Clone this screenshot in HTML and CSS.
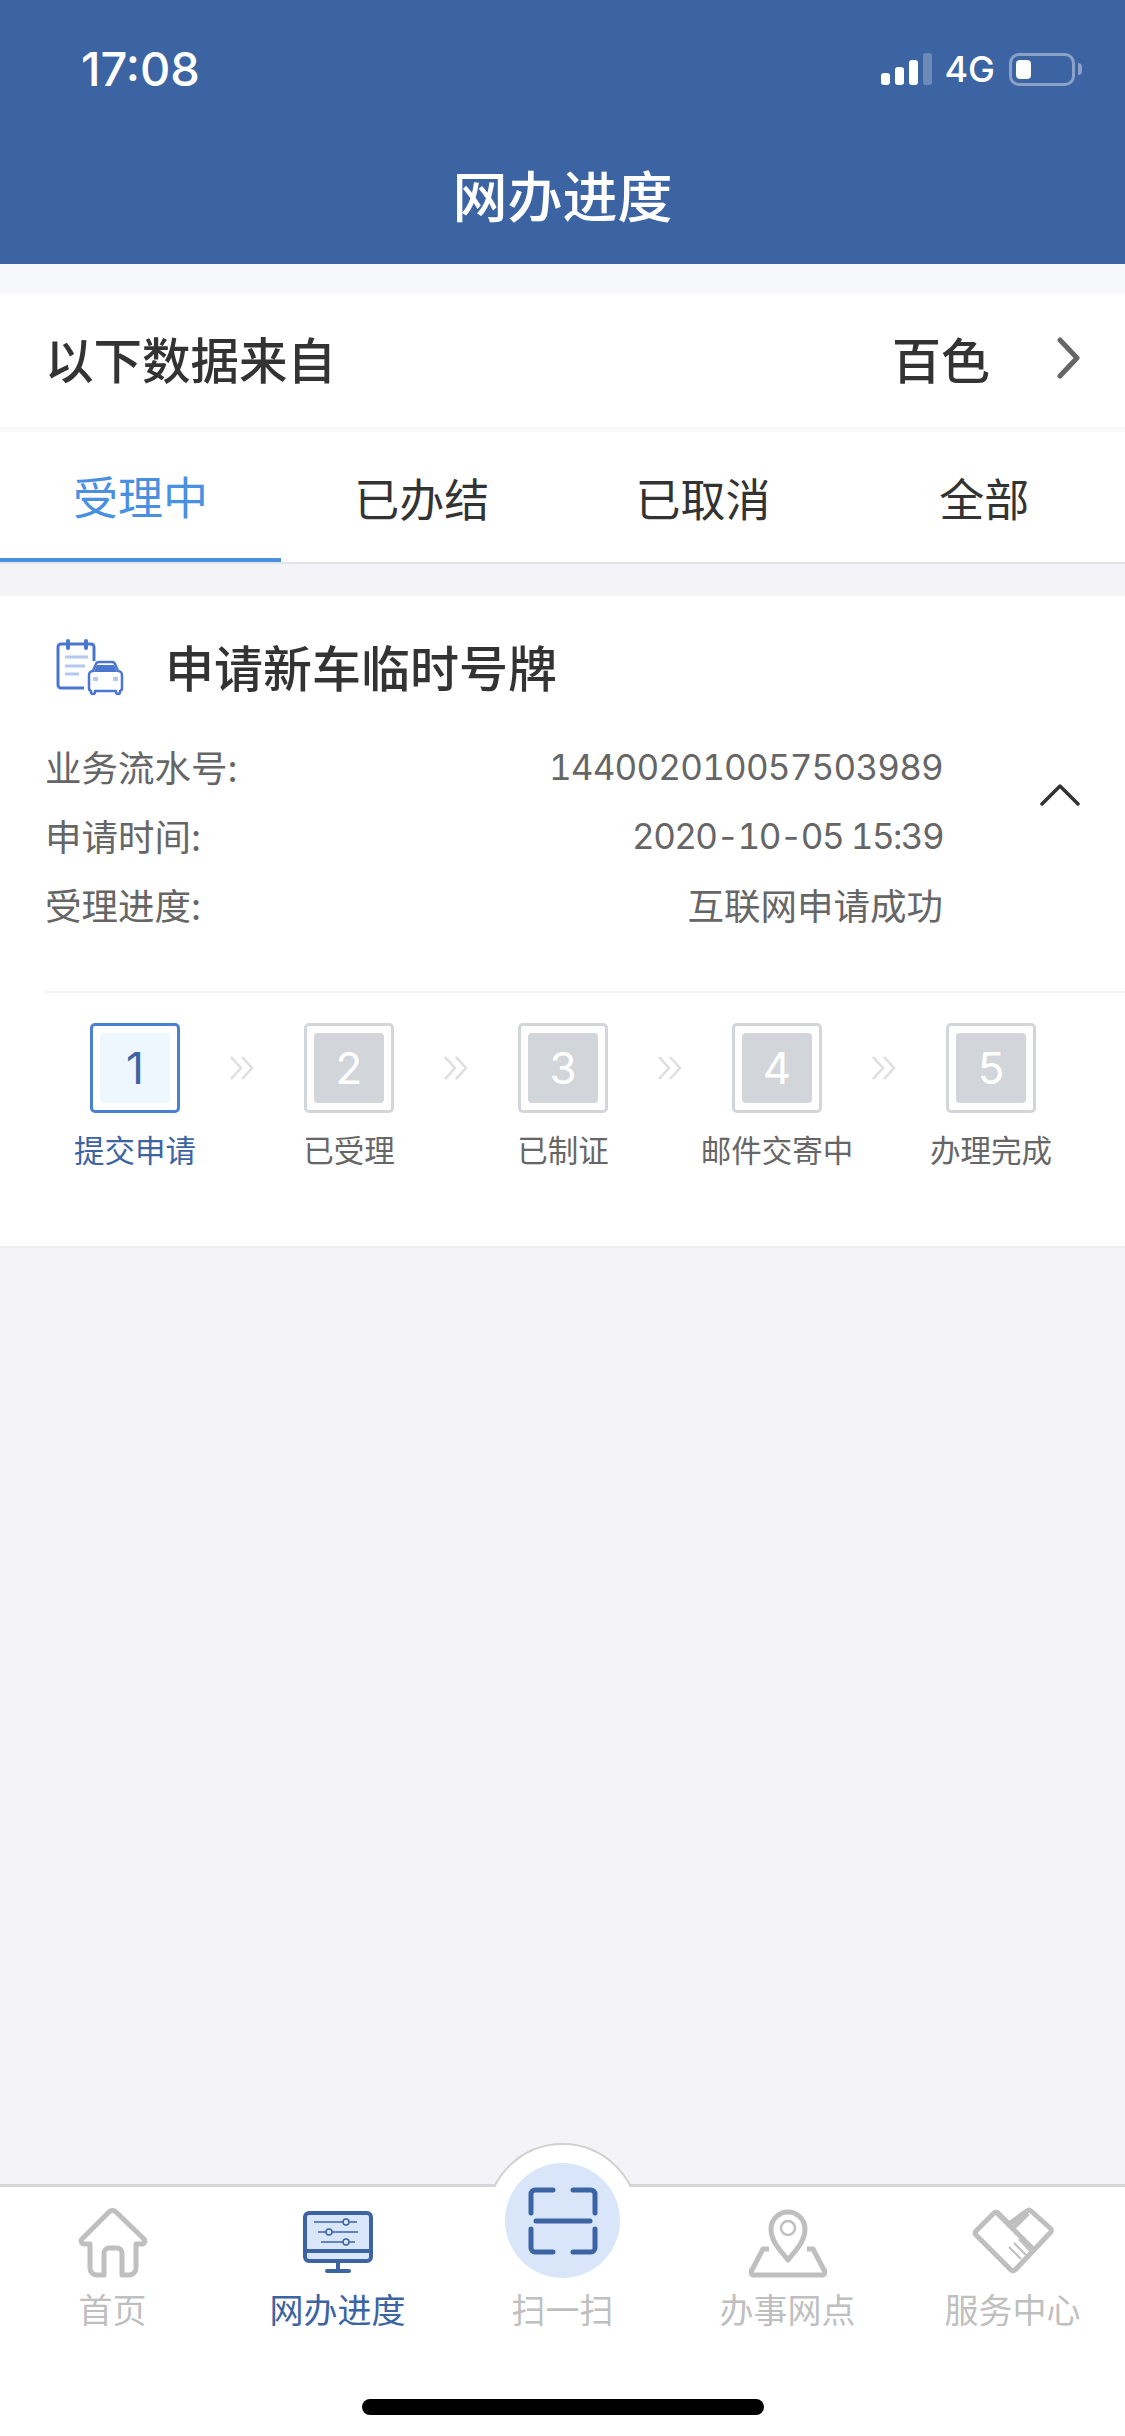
FILE: index.html
```html
<!DOCTYPE html>
<html lang="zh-CN">

<head>
  <meta charset="UTF-8" />
  <meta name="viewport" content="width=device-width, initial-scale=1" />
  <title>网办进度</title>
  <link rel="stylesheet" href="styles.css">
</head>

<body>
  <div class="page">
    <header class="header">
      <div class="status">
        <span class="time">17:08</span>
        <div class="status-right">
          <div class="signal">
            <i class="bar bar1"></i><i class="bar bar2"></i><i class="bar bar3"></i><i class="bar bar4"></i>
          </div>
          <span class="net">4G</span>
          <div class="battery"><i class="battery-fill"></i></div>
          <i class="battery-nub"></i>
        </div>
      </div>
      <h1 class="title">网办进度</h1>
    </header>

    <div class="source-band">
      <div class="source">
        <span class="source-label">以下数据来自</span>
        <span class="source-city">百色</span>
        <svg class="source-arrow" width="26" height="42" viewBox="0 0 26 42">
          <path d="M4 3 L21 21 L4 39" fill="none" stroke="#666" stroke-width="5" stroke-linecap="round" stroke-linejoin="round" />
        </svg>
      </div>
    </div>

    <nav class="tabs">
      <a class="tab active">受理中</a>
      <a class="tab">已办结</a>
      <a class="tab">已取消</a>
      <a class="tab">全部</a>
    </nav>

    <section class="card">
      <div class="card-head">
        <svg class="card-icon" width="70" height="58" viewBox="0 0 70 58">
          <path d="M28 49 H5 a3 3 0 0 1-3-3 V8 a3 3 0 0 1 3-3 H35 a3 3 0 0 1 3 3 V22" fill="none" stroke="#4a76cf" stroke-width="3" />
          <path d="M12 2 V9 M30 2 V9" stroke="#4a76cf" stroke-width="4" stroke-linecap="round" />
          <path d="M9 18 H32 M9 27 H29 M9 35 H23" stroke="#b5c8ee" stroke-width="3" />
          <path d="M33 36 a4 4 0 0 1 4-4 l3-7 a3 3 0 0 1 3-2 H56 a3 3 0 0 1 3 2 l3 7 a4 4 0 0 1 4 4 V49 a3 3 0 0 1-2 3 V53 a2 2 0 0 1-4 0 V52 H39 V53 a2 2 0 0 1-4 0 V52 a3 3 0 0 1-2-3 Z" fill="#fff" stroke="#4a76cf" stroke-width="2.5" stroke-linejoin="round" />
          <path d="M38 33 L41 26 H58 L61 33 Z" fill="#4a76cf" />
          <path d="M37 38 h5 v4 h-5 Z M57 38 h5 v4 h-5 Z" fill="#b5c8ee" />
        </svg>
        <h2 class="card-title">申请新车临时号牌</h2>
      </div>

      <div class="info">
        <div class="info-rows">
          <div class="info-row"><span>业务流水号:</span><span class="num">144002010057503989</span></div>
          <div class="info-row"><span>申请时间:</span><span class="num num-date">2020-10-05 15:39</span></div>
          <div class="info-row"><span>受理进度:</span><span>互联网申请成功</span></div>
        </div>
        <svg class="info-toggle" width="40" height="24" viewBox="0 0 40 24">
          <path d="M2 22 L20 4 L38 22" fill="none" stroke="#333" stroke-width="3.5" stroke-linecap="round" stroke-linejoin="round" />
        </svg>
      </div>

      <div class="steps">
        <div class="step current">
          <div class="step-box"><span class="step-num">1</span></div>
          <span class="step-label">提交申请</span>
        </div>
        <svg class="step-arrow" width="26" height="26" viewBox="0 0 26 26"><path d="M2 2 L12 13 L2 24 M13 2 L23 13 L13 24" fill="none" stroke="#dcdee2" stroke-width="2.5" /></svg>
        <div class="step">
          <div class="step-box"><span class="step-num">2</span></div>
          <span class="step-label">已受理</span>
        </div>
        <svg class="step-arrow" width="26" height="26" viewBox="0 0 26 26"><path d="M2 2 L12 13 L2 24 M13 2 L23 13 L13 24" fill="none" stroke="#dcdee2" stroke-width="2.5" /></svg>
        <div class="step">
          <div class="step-box"><span class="step-num">3</span></div>
          <span class="step-label">已制证</span>
        </div>
        <svg class="step-arrow" width="26" height="26" viewBox="0 0 26 26"><path d="M2 2 L12 13 L2 24 M13 2 L23 13 L13 24" fill="none" stroke="#dcdee2" stroke-width="2.5" /></svg>
        <div class="step">
          <div class="step-box"><span class="step-num">4</span></div>
          <span class="step-label">邮件交寄中</span>
        </div>
        <svg class="step-arrow" width="26" height="26" viewBox="0 0 26 26"><path d="M2 2 L12 13 L2 24 M13 2 L23 13 L13 24" fill="none" stroke="#dcdee2" stroke-width="2.5" /></svg>
        <div class="step">
          <div class="step-box"><span class="step-num">5</span></div>
          <span class="step-label">办理完成</span>
        </div>
      </div>
    </section>

    <footer class="tabbar">
      <div class="scan-arc"><i class="scan-arc-circle"></i></div>
      <div class="tabbar-items">
        <a class="bar-item">
          <svg class="bar-icon" width="74" height="74" viewBox="0 0 74 74">
            <path d="M14 38 H8 a3 3 0 0 1-2-5 L33 6 a5 5 0 0 1 7 0 L68 33 a3 3 0 0 1-2 5 H60 V62 a7 7 0 0 1-7 7 H46 V47 a5 5 0 0 0-5-5 H33 a5 5 0 0 0-5 5 V69 H21 a7 7 0 0 1-7-7 Z" fill="none" stroke="#bfbfbf" stroke-width="5" stroke-linejoin="round" />
          </svg>
          <span class="bar-label">首页</span>
        </a>
        <a class="bar-item active">
          <svg class="bar-icon" width="74" height="74" viewBox="0 0 74 74">
            <rect x="4" y="7" width="66" height="48" rx="4" fill="#d9e6fa" stroke="#3c64a2" stroke-width="4" />
            <path d="M4 45 H70" stroke="#3c64a2" stroke-width="4" />
            <path d="M37 55 V64" stroke="#3c64a2" stroke-width="4" />
            <path d="M26 65 H48" stroke="#3c64a2" stroke-width="4" stroke-linecap="round" />
            <path d="M13 16 H56 M17 26 H57 M20 36 H54" stroke="#3c64a2" stroke-width="1.5" />
            <circle cx="45" cy="16" r="3" fill="#d9e6fa" stroke="#3c64a2" stroke-width="1.5" />
            <circle cx="28" cy="26" r="3" fill="#d9e6fa" stroke="#3c64a2" stroke-width="1.5" />
            <circle cx="45" cy="36" r="3" fill="#d9e6fa" stroke="#3c64a2" stroke-width="1.5" />
          </svg>
          <span class="bar-label">网办进度</span>
        </a>
        <a class="bar-item">
          <div class="scan-circle">
            <svg width="70" height="68" viewBox="0 0 70 68">
              <path d="M25 3 H7 a4 4 0 0 0-4 4 V26 M45 3 H63 a4 4 0 0 1 4 4 V26 M3 42 V61 a4 4 0 0 0 4 4 H25 M67 42 V61 a4 4 0 0 1-4 4 H45" fill="none" stroke="#3c64a2" stroke-width="5" stroke-linecap="round" />
              <path d="M8 34 H62" stroke="#3c64a2" stroke-width="5" stroke-linecap="round" />
            </svg>
          </div>
          <span class="bar-icon-slot"></span>
          <span class="bar-label">扫一扫</span>
        </a>
        <a class="bar-item">
          <svg class="bar-icon" width="78" height="74" viewBox="0 0 78 74">
            <path d="M20 43 H14 L3 64 a3 3 0 0 0 3 5 H72 a3 3 0 0 0 3-5 L64 43 H58" fill="none" stroke="#bfbfbf" stroke-width="5" stroke-linejoin="round" />
            <path d="M39 54 C31 44 22 35 22 23 a17 17 0 0 1 34 0 C56 35 47 44 39 54 Z" fill="#fff" stroke="#bfbfbf" stroke-width="5" stroke-linejoin="round" />
            <circle cx="39" cy="22" r="7" fill="none" stroke="#bfbfbf" stroke-width="2.5" />
          </svg>
          <span class="bar-label">办事网点</span>
        </a>
        <a class="bar-item">
          <svg class="bar-icon" width="82" height="74" viewBox="0 0 82 74">
            <path d="M4 25 L22 7 a3 3 0 0 1 4 0 L37 18 L55 5 a3 3 0 0 1 4 0 L78 22 a3 3 0 0 1 0 5 L43 64 a3 3 0 0 1-4 0 L4 29 a3 3 0 0 1 0-4 Z" fill="none" stroke="#bfbfbf" stroke-width="5" stroke-linejoin="round" />
            <path d="M24 6 L61 43 M42 21 L56 7" stroke="#bfbfbf" stroke-width="5" />
            <path d="M37 41 L49 53 M42 37 L54 49 M47 33 L58 45" stroke="#bfbfbf" stroke-width="2" />
          </svg>
          <span class="bar-label">服务中心</span>
        </a>
      </div>
      <div class="home-row"><i class="home-indicator"></i></div>
    </footer>
  </div>
</body>

</html>
```

FILE: styles.css
```css
* {
  box-sizing: border-box;
}

body {
  margin: 0;
  font-family: "Noto Sans CJK SC", "Noto Sans", sans-serif;
  background-color: #f4f4f8;
  color: #333;
}

h1, h2 {
  margin: 0;
  font-weight: 500;
}

.page {
  display: flex;
  flex-direction: column;
  height: 2436px;
  overflow: hidden;
}

/* header */
.header {
  height: 264px;
  background-color: #3c64a2;
  color: white;
}

.status {
  display: flex;
  justify-content: space-between;
  align-items: center;
  height: 138px;
  padding: 0 43px 0 81px;
}

.time {
  margin-bottom: 2px;
  font-family: Inter, sans-serif;
  font-size: 47px;
  font-weight: 500;
}

.status-right {
  display: flex;
  align-items: center;
}

.signal {
  display: flex;
  align-items: flex-end;
  gap: 5px;
  height: 32px;
}

.bar {
  width: 9px;
  border-radius: 3px;
  background-color: white;
}

.bar1 { height: 12px; }
.bar2 { height: 18px; }
.bar3 { height: 25px; }
.bar4 { height: 32px; background-color: rgba(255, 255, 255, 0.25); }

.net {
  margin: 0 14px 0 12px;
  font-family: Inter, sans-serif;
  font-size: 36px;
  font-weight: 500;
}

.battery {
  width: 66px;
  height: 33px;
  padding: 4px;
  border: 3px solid rgba(255, 255, 255, 0.4);
  border-radius: 10px;
}

.battery-fill {
  display: block;
  width: 15px;
  height: 100%;
  border-radius: 4px;
  background-color: white;
}

.battery-nub {
  width: 4px;
  height: 12px;
  margin-left: 3px;
  border-radius: 0 4px 4px 0;
  background-color: rgba(255, 255, 255, 0.4);
}

.title {
  height: 126px;
  font-size: 55px;
  line-height: 111px;
  text-align: center;
}

/* source row */
.source-band {
  padding: 30px 0 5px;
  background-color: #f7f8fa;
}

.source {
  display: flex;
  align-items: center;
  height: 133px;
  padding: 0 43px 6px 45px;
  background-color: white;
}

.source-label {
  flex: 1;
  font-size: 48.5px;
  font-weight: 500;
}

.source-city {
  margin-right: 66px;
  font-size: 49px;
  font-weight: 500;
}

/* tabs */
.tabs {
  display: flex;
  height: 132px;
  border-bottom: 2px solid #e4e5e8;
  background-color: white;
}

.tab {
  display: flex;
  flex: 1;
  align-items: center;
  justify-content: center;
  height: 130px;
  font-size: 45px;
}

.tab.active {
  border-bottom: 4px solid #4a90e2;
  color: #4a90e2;
}

/* card */
.card {
  height: 652px;
  margin-top: 32px;
  background-color: white;
  border-bottom: 2px solid #eeeff2;
}

.card-head {
  display: flex;
  align-items: center;
  height: 138px;
  padding-left: 56px;
}

.card-icon {
  margin: 5px 39px 0 0;
}

.card-title {
  font-size: 49px;
}

.info {
  display: flex;
  height: 259px;
  margin-left: 45px;
  padding-bottom: 54px;
  align-items: center;
  border-bottom: 2px solid #f1f2f4;
}

.info-rows {
  width: 898px;
}

.info-row {
  display: flex;
  justify-content: space-between;
  align-items: center;
  height: 69px;
  font-size: 36.5px;
  color: #666;
}

.num {
  font-family: Inter, sans-serif;
  font-size: 35px;
  font-variant-numeric: tabular-nums;
  letter-spacing: -0.8px;
}

.num-date {
  letter-spacing: -1.6px;
}

.info-toggle {
  align-self: flex-start;
  margin: 48px 0 0 97px;
}

.steps {
  display: flex;
  padding: 30px 0 0 55px;
}

.step {
  display: flex;
  flex: 0 0 160px;
  flex-direction: column;
  align-items: center;
}

.step-box {
  display: flex;
  align-items: center;
  justify-content: center;
  width: 90px;
  height: 90px;
  border: 3px solid #d2d5da;
  border-radius: 5px;
}

.step-num {
  display: flex;
  align-items: center;
  justify-content: center;
  width: 70px;
  height: 70px;
  border-radius: 4px;
  background-color: #d2d5da;
  font-family: Inter, sans-serif;
  font-size: 44px;
  color: white;
}

.step.current .step-box {
  border-color: #4a80d6;
}

.step.current .step-num {
  background-color: #eef6fe;
  color: #3c64a2;
}

.step-label {
  margin-top: 14px;
  font-size: 30.5px;
  white-space: nowrap;
  color: #666;
}

.step.current .step-label {
  color: #3c64a2;
}

.step-arrow {
  flex: 0 0 26px;
  margin: 32px 14px 0;
}

/* bottom bar */
.tabbar {
  position: relative;
  height: 252px;
  margin-top: auto;
  border-top: 3px solid #d5d6d9;
  background-color: white;
}

.scan-arc {
  position: absolute;
  top: -44px;
  left: 486px;
  width: 153px;
  height: 44px;
  overflow: hidden;
}

.scan-arc-circle {
  display: block;
  width: 153px;
  height: 153px;
  border: 2px solid #d0d0d0;
  border-radius: 50%;
  background-color: white;
}

.tabbar-items {
  display: flex;
  height: 212px;
  padding-top: 19px;
}

.bar-item {
  position: relative;
  display: flex;
  flex: 1;
  flex-direction: column;
  align-items: center;
}

.bar-icon,
.bar-icon-slot {
  display: block;
  height: 74px;
}

.bar-label {
  margin-top: 4px;
  font-size: 34px;
  color: #bfbfbf;
}

.bar-item.active .bar-label {
  color: #3c64a2;
}

.scan-circle {
  position: absolute;
  top: -43px;
  left: 55px;
  display: flex;
  align-items: center;
  justify-content: center;
  width: 115px;
  height: 115px;
  border-radius: 50%;
  background-color: #d9e6fa;
}

.home-row {
  display: flex;
  justify-content: center;
}

.home-indicator {
  width: 402px;
  height: 16px;
  border-radius: 8px;
  background-color: black;
}
```
